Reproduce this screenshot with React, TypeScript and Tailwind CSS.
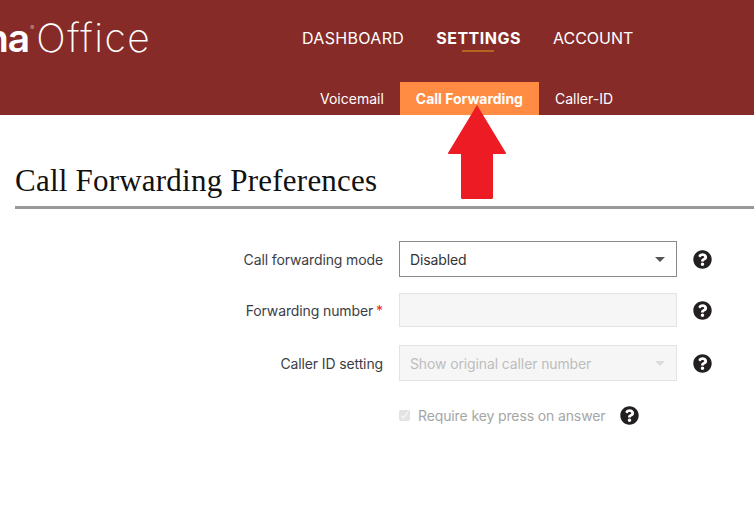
import { FaQuestionCircle } from 'react-icons/fa';

const sans = 'font-["Inter",sans-serif]';

function Help() {
  return <FaQuestionCircle className="text-[19px] text-[#231f20] shrink-0" />;
}

function Caret({ color }: { color: string }) {
  return (
    <svg width="10" height="5" viewBox="0 0 10 5" className="shrink-0">
      <path d="M0 0H10L5 5Z" fill={color} />
    </svg>
  );
}

export default function App() {
  return (
    <div className={`relative w-[754px] h-[516px] overflow-hidden bg-white ${sans}`}>
      {/* Header */}
      <header className="h-[115px] bg-[#862b28] flex flex-col text-white">
        <div className="flex items-start">
          <div className="w-[292px] h-[72px] overflow-hidden flex items-start pt-[13px] shrink-0">
            <span className="text-[39px] leading-[50px] font-semibold ml-[-15px] tracking-[-1px] whitespace-nowrap">na</span>
            <span className="text-[6px] leading-[8px] mt-[11px] ml-[1px] w-[6px] text-[#d9a8a4]">®</span>
            <span className="text-[39px] leading-[50px] font-extralight tracking-[1.5px] whitespace-nowrap">Office</span>
          </div>
          <nav className="flex gap-[32px] pl-[10px] pt-[29px] text-[16px] leading-[19px]">
            <a className="tracking-[0.33px]">DASHBOARD</a>
            <a className="relative font-bold tracking-[0.5px]">
              SETTINGS
              <span className="absolute left-[26px] top-[21px] w-[32px] h-[2px] bg-[#b5651d]" />
            </a>
            <a>ACCOUNT</a>
          </nav>
        </div>
        <div className="mt-[10px] flex pl-[304px] text-[14px] leading-[33px]">
          <a className="px-[16px]">Voicemail</a>
          <a className="px-[16px] bg-[#ff8c42] font-bold">Call Forwarding</a>
          <a className="px-[16px]">Caller-ID</a>
        </div>
      </header>

      {/* Page title */}
      <div className="pl-[15px] pt-[47px]">
        <h1 className='font-["Liberation_Serif",serif] text-[31px] leading-[38px] text-[#111] tracking-[0.22px] pb-[6px] border-b-[3px] border-[#999]'>
          Call Forwarding Preferences
        </h1>
      </div>

      {/* Form */}
      <form className="pt-[32px] text-[14px] tracking-[-0.12px] text-[#3d3d45]">
        <div className="flex items-center h-[36px]">
          <label className="w-[383px] text-right">Call forwarding mode</label>
          <div className="ml-[16px] w-[278px] h-[36px] border border-[#8a8a8a] flex items-center justify-between pl-[10px] pr-[11px] text-[#333]">
            <span>Disabled</span>
            <Caret color="#555" />
          </div>
          <span className="ml-[16px]"><Help /></span>
        </div>
        <div className="flex items-center h-[34px] mt-[16px]">
          <label className="w-[383px] text-right">
            Forwarding number<span className="text-[#e8232a] ml-[3px]">*</span>
          </label>
          <input disabled className="ml-[16px] w-[278px] h-[34px] border border-[#e3e3e3] bg-[#f6f6f6]" />
          <span className="ml-[16px]"><Help /></span>
        </div>
        <div className="flex items-center h-[36px] mt-[18px]">
          <label className="w-[383px] text-right">Caller ID setting</label>
          <div className="ml-[16px] w-[278px] h-[36px] border border-[#e3e3e3] bg-[#f6f6f6] flex items-center justify-between pl-[10px] pr-[11px] text-[#bdbdbd]">
            <span>Show original caller number</span>
            <Caret color="#dcdcdc" />
          </div>
          <span className="ml-[16px]"><Help /></span>
        </div>
        <div className="flex items-center h-[20px] mt-[24px] pl-[399px] text-[#a6a6a6]">
          <input type="checkbox" checked disabled readOnly className="w-[11px] h-[11px] opacity-60" />
          <span className="ml-[8px]">Require key press on answer</span>
          <span className="ml-[15px]"><Help /></span>
        </div>
      </form>

      {/* Annotation arrow */}
      <svg className="absolute left-[446px] top-[104px]" width="62" height="97" viewBox="0 0 62 97">
        <path
          d="M31 1L60 49Q60.5 50 59 50H47V93.5Q47 95 45.5 95H16.5Q15 95 15 93.5V50H3Q1.500 50 2 49Z"
          fill="#ed1c24"
        />
      </svg>
    </div>
  );
}
